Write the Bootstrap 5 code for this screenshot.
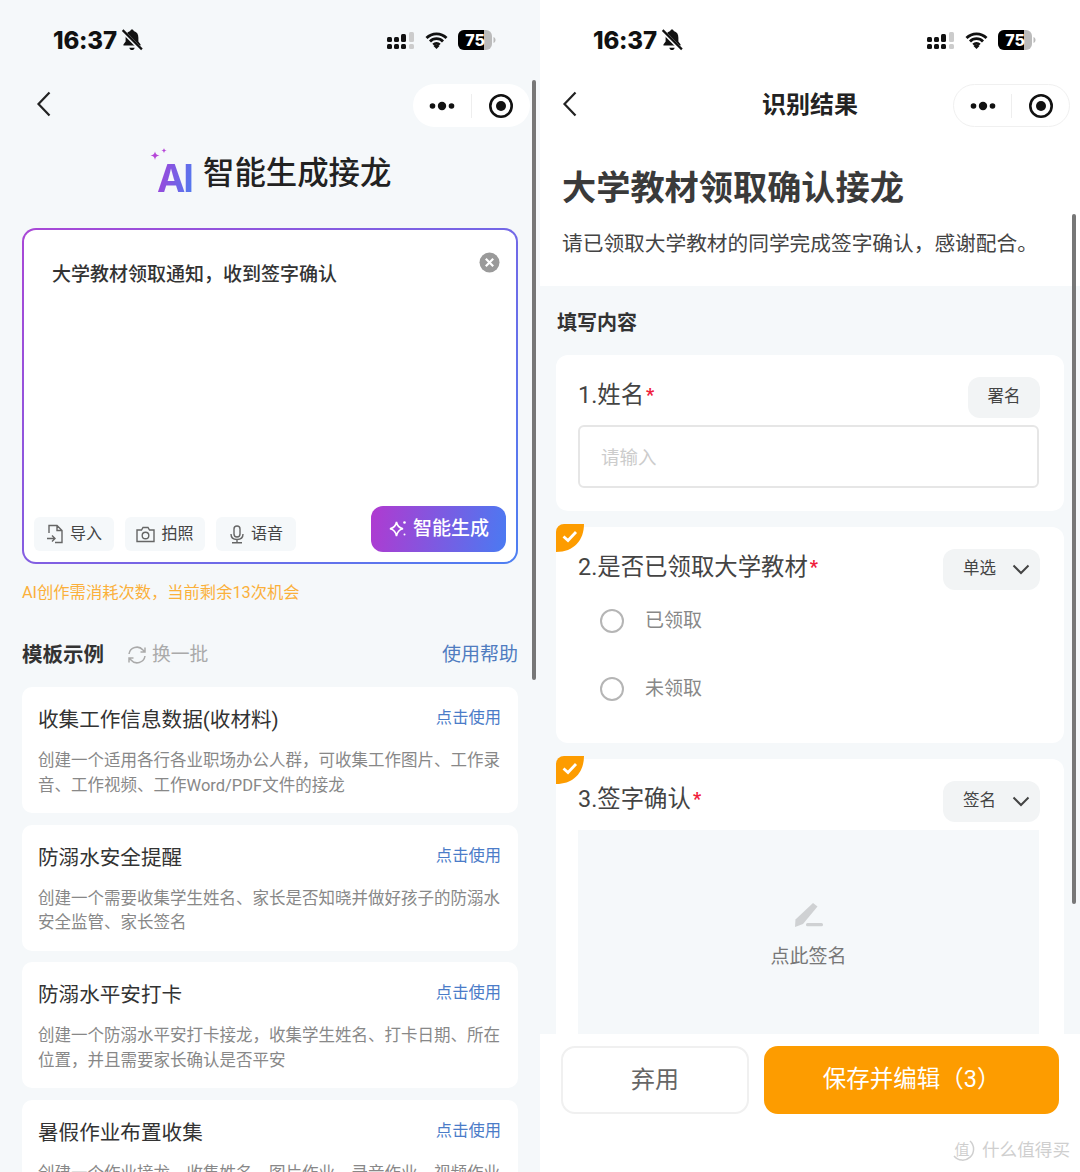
<!DOCTYPE html>
<html lang="zh-CN">
<head>
<meta charset="utf-8">
<title>智能生成接龙</title>
<link href="https://cdn.jsdelivr.net/npm/bootstrap@5.3.0/dist/css/bootstrap.min.css" rel="stylesheet">
<style>
html,body{margin:0;background:#fff}
body{font-family:Roboto,"Noto Sans CJK SC",sans-serif;width:1080px;height:1172px;overflow:hidden;color:#333}
.phone{width:540px;height:1172px;overflow:hidden;position:relative;flex:none}
.phone>*{flex:none}
.phone-l{background:#f5f8fa}
.phone-r{background:#fff}
.scrollbar{position:absolute;width:4px;background:#777;border-radius:2px}
.sb-l{left:532px;top:80px;height:600px}
.sb-r{left:532px;top:214px;height:690px}
.status{height:80px;padding:0 44px 0 53px}
.clock{font-family:Inter,Roboto,sans-serif;font-weight:800;font-size:24px;line-height:30px;padding-top:2px;letter-spacing:-.2px;color:#111}
.topnav{padding-right:10px;position:relative;padding-top:4px}
.nav-l{height:64px}
.nav-r{height:50px}
.back-l{margin-left:36px;margin-top:7px}
.back-r{margin-left:22px;margin-top:7px}
.capsule{width:117px;height:43px;border-radius:22px;background:#fff;margin-left:auto}
.phone-r .capsule{border:1px solid #f0f0f0}
.cap-sep{width:1px;height:24px;background:#eee}
.cap-half{flex:1}
.navtitle{position:absolute;left:0;right:0;top:4px;height:43px;line-height:43px;text-align:center;font-size:24px;font-weight:700;color:#222;pointer-events:none}
.ai-head{height:64px;padding-left:150px;margin-top:-2px;gap:11px}
.ai-logo{position:relative;width:42px;height:50px}
.ai-mark{position:absolute;left:7px;top:7px;font-family:Inter,Roboto,sans-serif;font-weight:700;font-size:38px;line-height:44px;letter-spacing:-2px;background:linear-gradient(100deg,#a63fd8,#4f7cf0);-webkit-background-clip:text;background-clip:text;color:transparent}
.ai-spark{position:absolute;left:0;top:-1px}
.ai-title{font-size:31.4px;font-weight:500;color:#222;line-height:44px}
.prompt{margin:22px 22px 0;height:336px;border:2px solid transparent;border-radius:14px;background:linear-gradient(#fff,#fff) padding-box,linear-gradient(135deg,#a947d6,#4d7ff2) border-box;position:relative}
.prompt-text{padding:31px 0 0 28px;font-size:19px;line-height:28px;font-weight:500;color:#333;flex:1}
.clear-x{position:absolute;right:18px;top:22px;margin-right:-2px}
.prompt-tools{padding:0 10px 10px;align-items:flex-end}
.tool{height:34px;width:80px;background:#f5f8fa;border-radius:6px;margin-right:11px;font-size:16px;color:#444;gap:6px;margin-bottom:1px}
.tool-last{margin-right:0}
.gen{width:135px;height:46px;border-radius:12px;background:linear-gradient(100deg,#b03ad0,#4a7af2);color:#fff;font-size:19px;font-weight:500;gap:5px;margin-left:auto;margin-right:0;border:0;padding:0}
.tip{margin:17px 22px 0;font-size:16.300px;line-height:24px;color:#fbb03b}
.tplhead{margin:35px 22px 0;height:30px}
.tplhead-t{font-size:20.500px;font-weight:700;color:#333;line-height:30px}
.swap{margin-left:23px;font-size:18.800px;color:#aaa;gap:5px}
.help{margin-left:auto;font-size:19px;color:#4f7cc0}
.tpl-list{margin:17px 22px 0;gap:11.500px}
.tpl{background:#fff;border-radius:10px;height:126px;padding:18px 17px 0 16px;flex:none}
.tpl-t{font-size:20.600px;line-height:30px;color:#333}
.tpl-use{font-size:16.300px;color:#4b7cc8;line-height:26px;margin-left:auto}
.tpl-b{margin-top:14px;font-size:16.500px;line-height:24.500px;color:#888}
.intro{padding:21px 22px 0;height:156px;background:#fff}
.intro-t{font-size:34.200px;font-weight:700;color:#3a3a3a;line-height:48px;padding-top:13px;margin:0}
.intro-d{font-size:20.700px;color:#444;line-height:30px;margin-top:17px}
.phone>.fill{background:#f5f8fa;flex:1 1 0;min-height:0;overflow:hidden;padding:0 16px}
.fill-t{font-size:20px;font-weight:700;line-height:30px;color:#333;padding:22px 0 17px 1px}
.qcard{background:#fff;border-radius:12px;position:relative;padding:22px 24px 0 22px;margin-bottom:16px}
.q1{height:156px}
.q2{height:216px}
.q3{height:400px}
.qhead{height:41px;align-items:center}
.qt{font-size:23.400px;line-height:36px;color:#444;margin-top:-4px}
.req{color:#f0203c;font-size:18px;font-weight:700;margin-left:2px;position:relative;top:-2px}
.qtag{margin-left:auto;height:41px;background:#f2f4f5;border-radius:12px;font-size:16.500px;color:#444;flex:none}
.tag-s{width:72px;justify-content:center}
.tag-m{width:97px;padding-left:20px;gap:16px}
.fake-input{height:63px;margin:7px 1px 0 0;border:2px solid #e6e6e6;border-radius:6px;padding-left:21px;font-size:18.500px;color:#ccc;line-height:62px}
.opt{height:68px;align-items:center;font-size:19px;color:#888;padding-left:22px;gap:21px}
.opts{margin-top:-3px}
.circle{width:24px;height:24px;border-radius:50%;border:2px solid #b5b5b5;flex:none}
.leaf{position:absolute;left:0;top:-3px;display:block}
.signbox{background:#f5f8fa;height:260px;margin:8px 1px 0 0;padding-top:72px;text-align:center;font-size:19px;color:#777;line-height:28px}
.signbox svg{display:block;margin:0 auto 16px}
.foot{height:138px;background:#fff;padding:12px 21px 0;gap:15px;align-items:flex-start}
.btn-quit{width:189px;height:68px;border:2px solid #f0f0f0;border-radius:14px;background:#fff;color:#666;font-size:24px;padding:0}
.btn-save{width:296px;height:68px;border:0;border-radius:14px;background:#fd9c00;color:#fff;font-size:23.500px;padding:0}
.wmark{position:absolute;left:411px;top:1135px;gap:7px;font-size:17.600px;color:#cfcfcf;line-height:30px}
.ml-wifi{margin-left:10px}
.ml-batt{margin-left:10px}
</style>
</head>
<body>
<div class="d-flex">
  <!-- LEFT -->
  <div class="phone phone-l d-flex flex-column">
    <div class="status d-flex align-items-center">
      <span class="clock">16:37</span>
      <svg class="ms-1" width="22" height="22" viewBox="2 1 18 20"><path d="M11 1.500c.9 0 1.500.6 1.600 1.400 2.800.7 4.200 3 4.200 6v3.400l2 2.700v1H3.200v-1l2-2.700V8.900c0-3 1.400-5.300 4.200-6 .1-.8.700-1.400 1.600-1.400zM8.600 18h4.800c-.2 1.300-1.200 2.200-2.400 2.200S8.800 19.300 8.600 18z" fill="#111"/><path d="M2.500 3l16.500 16.500" stroke="#f5f8fa" stroke-width="3.500"/><path d="M2.500 2l17.500 17.500" stroke="#111" stroke-width="2"/></svg>
      <div class="ms-auto d-flex align-items-center">
        <svg width="28" height="17" viewBox="0 0 28 17"><g fill="#111"><rect x="0" y="5" width="5" height="5" rx="1.500"/><rect x="0" y="12" width="5" height="5" rx="1.500"/><rect x="7" y="5" width="5" height="5" rx="1.500"/><rect x="7" y="12" width="5" height="5" rx="1.500"/><rect x="14" y="2" width="5" height="8" rx="1.500"/><rect x="14" y="12" width="5" height="5" rx="1.500"/></g><rect x="22" y="0" width="5" height="10" rx="1.500" fill="#ccc"/><rect x="22" y="12" width="5" height="5" rx="1.500" fill="#ccc"/></svg>
        <svg class="ml-wifi" width="23" height="17" viewBox="0 0 23 17"><path d="M1.500 6a14 14 0 0 1 20 0M5 9.500a9 9 0 0 1 13 0M8.300 12.700a4.500 4.500 0 0 1 6.400 0" fill="none" stroke="#111" stroke-width="2.800"/><path d="M11.500 17l-3-3a4.200 4.200 0 0 1 6 0z" fill="#111"/></svg>
        <svg class="ml-batt" width="38" height="20" viewBox="0 0 38 20"><rect x="0" y="0" width="34" height="20" rx="6" fill="#bbb"/><path d="M6 0h20v20H6a6 6 0 0 1-6-6V6a6 6 0 0 1 6-6z" fill="#000"/><path d="M35.500 7c1.400.5 2 1.600 2 3s-.6 2.500-2 3z" fill="#bbb"/><text x="17" y="16" font-family="Inter,Roboto,sans-serif" font-size="16" font-weight="800" fill="#fff" text-anchor="middle">75</text></svg>
      </div>
    </div>
    <div class="topnav nav-l d-flex align-items-start">
      <svg class="back-l" width="16" height="26" viewBox="0 0 16 26"><path d="M13.500 1.500L2.500 13l11 11.500" fill="none" stroke="#222" stroke-width="2.200"/></svg>
      <div class="capsule d-flex align-items-center">
        <div class="cap-half d-flex justify-content-center"><svg width="26" height="10" viewBox="0 0 26 10"><circle cx="3.500" cy="5" r="2.800" fill="#111"/><circle cx="13" cy="5" r="4.200" fill="#111"/><circle cx="22.500" cy="5" r="2.800" fill="#111"/></svg></div>
        <div class="cap-sep"></div>
        <div class="cap-half d-flex justify-content-center"><svg width="26" height="26" viewBox="0 0 26 26"><circle cx="13" cy="13" r="10.700" fill="none" stroke="#111" stroke-width="2.600"/><circle cx="13" cy="13" r="5" fill="#111"/></svg></div>
      </div>
    </div>
    <div class="ai-head d-flex align-items-center">
      <div class="ai-logo">
        <svg class="ai-spark" width="24" height="20" viewBox="0 0 24 20"><path d="M5 3.500c.5 2.500 1.500 3.500 4.500 4-3 .5-4 1.500-4.500 4.500-.5-3-1.500-4-4.500-4.500 3-.5 4-1.500 4.500-4z" fill="#b545d8"/><path d="M14 0c.3 1.500.8 2.200 2.800 2.500-2 .3-2.500 1-2.800 2.800-.3-1.800-.8-2.500-2.800-2.800 2-.3 2.500-1 2.800-2.500z" fill="#b545d8"/></svg>
        <span class="ai-mark">AI</span>
      </div>
      <span class="ai-title">智能生成接龙</span>
    </div>
    <div class="prompt d-flex flex-column">
      <div class="prompt-text">大学教材领取通知，收到签字确认</div>
      <svg class="clear-x" width="21" height="21" viewBox="0 0 21 21"><circle cx="10.500" cy="10.500" r="10" fill="#9a9a9a"/><path d="M6.800 6.800l7.400 7.400M14.200 6.800l-7.400 7.400" stroke="#fff" stroke-width="2.200"/></svg>
      <div class="prompt-tools d-flex">
        <div class="tool d-flex align-items-center justify-content-center">
          <svg width="18" height="20" viewBox="0 0 18 20"><path d="M3 9V1.500h8l5 5V18.500H9M11 1.500V6.500H16M1 14.500h8M6 11.500l3 3-3 3" fill="none" stroke="#666" stroke-width="1.400"/></svg><span>导入</span>
        </div>
        <div class="tool d-flex align-items-center justify-content-center">
          <svg width="19" height="17" viewBox="0 0 19 17"><path d="M1 4h4.500L7 1.500h5L13.500 4H18v11.500H1z" fill="none" stroke="#666" stroke-width="1.400"/><circle cx="9.500" cy="9.500" r="3.300" fill="none" stroke="#666" stroke-width="1.400"/></svg><span>拍照</span>
        </div>
        <div class="tool tool-last d-flex align-items-center justify-content-center">
          <svg width="16" height="19" viewBox="0 0 16 19"><rect x="5" y="1" width="6" height="11" rx="3" fill="none" stroke="#666" stroke-width="1.400"/><path d="M2 9c0 3.500 2.500 5.500 6 5.500s6-2 6-5.500M8 14.500v2.500M3 17.800h10" fill="none" stroke="#666" stroke-width="1.400"/></svg><span>语音</span>
        </div>
        <button type="button" class="btn gen d-flex align-items-center justify-content-center">
          <svg width="20" height="20" viewBox="0 0 20 20"><path d="M8.500 3c.7 4 2.300 5.800 6.500 6.800-4.200 1-5.800 2.800-6.500 7.200-.7-4.400-2.300-6.200-6.500-7.200C6.200 8.800 7.800 7 8.500 3z" fill="none" stroke="#fff" stroke-width="1.600"/><circle cx="16.500" cy="3.500" r="1.300" fill="#fff"/><circle cx="16.500" cy="15.500" r="1" fill="#fff"/></svg><span>智能生成</span>
        </button>
      </div>
    </div>
    <div class="tip">AI创作需消耗次数，当前剩余13次机会</div>
    <div class="tplhead d-flex align-items-center">
      <span class="tplhead-t">模板示例</span>
      <span class="swap d-flex align-items-center">
        <svg width="20" height="20" viewBox="0 0 20 20"><path d="M2 9a8 8 0 0 1 14-4l2 2M18 11a8 8 0 0 1-14 4l-2-2M18 2.500V7h-4.500M2 17.500V13h4.500" fill="none" stroke="#aaa" stroke-width="1.500"/></svg>换一批
      </span>
      <span class="help">使用帮助</span>
    </div>
    <div class="tpl-list d-flex flex-column">
      <div class="tpl">
        <div class="d-flex"><span class="tpl-t">收集工作信息数据(收材料)</span><span class="tpl-use">点击使用</span></div>
        <div class="tpl-b">创建一个适用各行各业职场办公人群，可收集工作图片、工作录音、工作视频、工作Word/PDF文件的接龙</div>
      </div>
      <div class="tpl">
        <div class="d-flex"><span class="tpl-t">防溺水安全提醒</span><span class="tpl-use">点击使用</span></div>
        <div class="tpl-b">创建一个需要收集学生姓名、家长是否知晓并做好孩子的防溺水安全监管、家长签名</div>
      </div>
      <div class="tpl">
        <div class="d-flex"><span class="tpl-t">防溺水平安打卡</span><span class="tpl-use">点击使用</span></div>
        <div class="tpl-b">创建一个防溺水平安打卡接龙，收集学生姓名、打卡日期、所在位置，并且需要家长确认是否平安</div>
      </div>
      <div class="tpl">
        <div class="d-flex"><span class="tpl-t">暑假作业布置收集</span><span class="tpl-use">点击使用</span></div>
        <div class="tpl-b">创建一个作业接龙，收集姓名、图片作业、录音作业、视频作业</div>
      </div>
    </div>
    <div class="scrollbar sb-l"></div>
  </div>

  <!-- RIGHT -->
  <div class="phone phone-r d-flex flex-column">
    <div class="status d-flex align-items-center">
      <span class="clock">16:37</span>
      <svg class="ms-1" width="22" height="22" viewBox="2 1 18 20"><path d="M11 1.500c.9 0 1.500.6 1.600 1.400 2.800.7 4.200 3 4.200 6v3.400l2 2.700v1H3.200v-1l2-2.700V8.900c0-3 1.400-5.300 4.200-6 .1-.8.700-1.400 1.600-1.400zM8.600 18h4.800c-.2 1.300-1.200 2.200-2.400 2.200S8.800 19.300 8.600 18z" fill="#111"/><path d="M2.500 3l16.500 16.500" stroke="#fff" stroke-width="3.500"/><path d="M2.500 2l17.500 17.500" stroke="#111" stroke-width="2"/></svg>
      <div class="ms-auto d-flex align-items-center">
        <svg width="28" height="17" viewBox="0 0 28 17"><g fill="#111"><rect x="0" y="5" width="5" height="5" rx="1.500"/><rect x="0" y="12" width="5" height="5" rx="1.500"/><rect x="7" y="5" width="5" height="5" rx="1.500"/><rect x="7" y="12" width="5" height="5" rx="1.500"/><rect x="14" y="2" width="5" height="8" rx="1.500"/><rect x="14" y="12" width="5" height="5" rx="1.500"/></g><rect x="22" y="0" width="5" height="10" rx="1.500" fill="#ccc"/><rect x="22" y="12" width="5" height="5" rx="1.500" fill="#ccc"/></svg>
        <svg class="ml-wifi" width="23" height="17" viewBox="0 0 23 17"><path d="M1.500 6a14 14 0 0 1 20 0M5 9.500a9 9 0 0 1 13 0M8.300 12.700a4.500 4.500 0 0 1 6.400 0" fill="none" stroke="#111" stroke-width="2.800"/><path d="M11.500 17l-3-3a4.200 4.200 0 0 1 6 0z" fill="#111"/></svg>
        <svg class="ml-batt" width="38" height="20" viewBox="0 0 38 20"><rect x="0" y="0" width="34" height="20" rx="6" fill="#bbb"/><path d="M6 0h20v20H6a6 6 0 0 1-6-6V6a6 6 0 0 1 6-6z" fill="#000"/><path d="M35.500 7c1.400.5 2 1.600 2 3s-.6 2.500-2 3z" fill="#bbb"/><text x="17" y="16" font-family="Inter,Roboto,sans-serif" font-size="16" font-weight="800" fill="#fff" text-anchor="middle">75</text></svg>
      </div>
    </div>
    <div class="topnav nav-r d-flex align-items-start">
      <svg class="back-r" width="16" height="26" viewBox="0 0 16 26"><path d="M13.500 1.500L2.500 13l11 11.500" fill="none" stroke="#222" stroke-width="2.200"/></svg>
      <div class="navtitle">识别结果</div>
      <div class="capsule d-flex align-items-center">
        <div class="cap-half d-flex justify-content-center"><svg width="26" height="10" viewBox="0 0 26 10"><circle cx="3.500" cy="5" r="2.800" fill="#111"/><circle cx="13" cy="5" r="4.200" fill="#111"/><circle cx="22.500" cy="5" r="2.800" fill="#111"/></svg></div>
        <div class="cap-sep"></div>
        <div class="cap-half d-flex justify-content-center"><svg width="26" height="26" viewBox="0 0 26 26"><circle cx="13" cy="13" r="10.700" fill="none" stroke="#111" stroke-width="2.600"/><circle cx="13" cy="13" r="5" fill="#111"/></svg></div>
      </div>
    </div>
    <div class="intro">
      <h1 class="intro-t">大学教材领取确认接龙</h1>
      <div class="intro-d">请已领取大学教材的同学完成签字确认，感谢配合。</div>
    </div>
    <div class="fill">
      <div class="fill-t">填写内容</div>
      <div class="qcard q1">
        <div class="qhead d-flex">
          <span class="qt">1.姓名<span class="req">*</span></span>
          <span class="qtag tag-s d-flex align-items-center">署名</span>
        </div>
        <div class="fake-input">请输入</div>
      </div>
      <div class="qcard q2">
        <svg class="leaf" width="28" height="28" viewBox="0 0 28 28"><path d="M8 0h20c0 16-10 28-28 28V8a8 8 0 0 1 8-8z" fill="#fd9c00"/><path d="M7.500 12.500l4.500 4 8-8.500" fill="none" stroke="#fff" stroke-width="2.800"/></svg>
        <div class="qhead d-flex">
          <span class="qt">2.是否已领取大学教材<span class="req">*</span></span>
          <span class="qtag tag-m d-flex align-items-center">单选<svg width="18" height="11" viewBox="0 0 18 11"><path d="M1.500 1.500L9 9l7.500-7.500" fill="none" stroke="#444" stroke-width="2"/></svg></span>
        </div>
        <div class="opts">
          <div class="opt d-flex"><span class="circle"></span><span>已领取</span></div>
          <div class="opt d-flex"><span class="circle"></span><span>未领取</span></div>
        </div>
      </div>
      <div class="qcard q3">
        <svg class="leaf" width="28" height="28" viewBox="0 0 28 28"><path d="M8 0h20c0 16-10 28-28 28V8a8 8 0 0 1 8-8z" fill="#fd9c00"/><path d="M7.500 12.500l4.500 4 8-8.500" fill="none" stroke="#fff" stroke-width="2.800"/></svg>
        <div class="qhead d-flex">
          <span class="qt">3.签字确认<span class="req">*</span></span>
          <span class="qtag tag-m d-flex align-items-center">签名<svg width="18" height="11" viewBox="0 0 18 11"><path d="M1.500 1.500L9 9l7.500-7.500" fill="none" stroke="#444" stroke-width="2"/></svg></span>
        </div>
        <div class="signbox">
          <svg width="29" height="25" viewBox="0 0 29 25"><path d="M19 1l4.500 3.500L9 22 1 25l.5-7.500z" fill="#cfd1d3"/><rect x="12" y="21" width="17" height="3.200" rx="1.500" fill="#cfd1d3"/></svg>
          点此签名
        </div>
      </div>
    </div>
    <div class="foot d-flex">
      <button type="button" class="btn btn-quit">弃用</button>
      <button type="button" class="btn btn-save">保存并编辑（3）</button>
    </div>
    <div class="scrollbar sb-r"></div>
    <div class="wmark d-flex align-items-center">
      <svg width="24" height="24" viewBox="0 0 24 24"><path d="M19 3a11 11 0 1 1-16 15" fill="none" stroke="#cfcfcf" stroke-width="1.500"/><text x="11" y="17" font-family="Noto Sans CJK SC,sans-serif" font-size="15" fill="#cfcfcf" text-anchor="middle">值</text></svg>
      <span>什么值得买</span>
    </div>
  </div>
</div>
<script src="https://cdn.jsdelivr.net/npm/bootstrap@5.3.0/dist/js/bootstrap.bundle.min.js"></script>
</body>
</html>
